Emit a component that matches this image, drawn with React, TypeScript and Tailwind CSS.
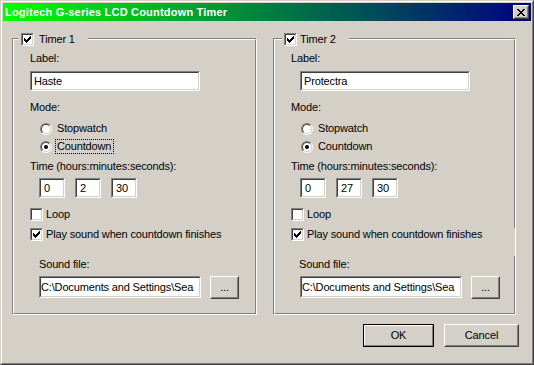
import React from 'react';

function Sunken({ className = '', innerClassName = '', children }: { className?: string; innerClassName?: string; children?: React.ReactNode }) {
  return (
    <div className={`border border-t-[#808080] border-l-[#808080] border-b-white border-r-white ${className}`}>
      <div className={`h-full w-full border border-t-[#404040] border-l-[#404040] border-b-[#d4d0c8] border-r-[#d4d0c8] bg-white overflow-hidden whitespace-nowrap ${innerClassName}`}>
        {children}
      </div>
    </div>
  );
}

function Raised({ className = '', children }: { className?: string; children?: React.ReactNode }) {
  return (
    <div className={`border border-t-white border-l-white border-b-[#404040] border-r-[#404040] bg-[#d4d0c8] ${className}`}>
      <div className="h-full w-full border border-t-[#d4d0c8] border-l-[#d4d0c8] border-b-[#808080] border-r-[#808080] flex items-center justify-center">
        {children}
      </div>
    </div>
  );
}

function Check() {
  return (
    <svg width="7" height="7" viewBox="0 0 7 7" shapeRendering="crispEdges" className="block">
      <rect x="0" y="2" width="1" height="3" fill="#000" />
      <rect x="1" y="3" width="1" height="3" fill="#000" />
      <rect x="2" y="4" width="1" height="3" fill="#000" />
      <rect x="3" y="3" width="1" height="3" fill="#000" />
      <rect x="4" y="2" width="1" height="3" fill="#000" />
      <rect x="5" y="1" width="1" height="3" fill="#000" />
      <rect x="6" y="0" width="1" height="3" fill="#000" />
    </svg>
  );
}

function CheckBox({ checked }: { checked: boolean }) {
  return (
    <div className="w-[13px] h-[13px] shrink-0 border border-t-[#808080] border-l-[#808080] border-b-white border-r-white">
      <div className="h-full w-full border border-t-[#404040] border-l-[#404040] border-b-[#d4d0c8] border-r-[#d4d0c8] bg-white flex items-center justify-center">
        {checked ? <Check /> : null}
      </div>
    </div>
  );
}

function Radio({ checked }: { checked: boolean }) {
  return (
    <div className="w-[12px] h-[12px] shrink-0 rounded-full border border-t-[#808080] border-l-[#808080] border-b-white border-r-white">
      <div className="h-full w-full rounded-full border border-t-[#404040] border-l-[#404040] border-b-[#d4d0c8] border-r-[#d4d0c8] bg-white flex items-center justify-center">
        {checked ? <div className="w-[4px] h-[4px] rounded-full bg-black" /> : null}
      </div>
    </div>
  );
}

function CloseGlyph() {
  const px: [number, number][] = [];
  const rows = ['##....##', '.##..##.', '..####..', '...##...', '..####..', '.##..##.', '##....##'];
  rows.forEach((r, y) => r.split('').forEach((c, x) => { if (c === '#') px.push([x, y]); }));
  return (
    <svg width="8" height="7" viewBox="0 0 8 7" shapeRendering="crispEdges" className="block">
      {px.map(([x, y]) => <rect key={`${x}-${y}`} x={x} y={y} width="1" height="1" fill="#000" />)}
    </svg>
  );
}

type GroupProps = {
  width: string;
  caption: string;
  captionPos: string;
  captionGap: string;
  label: string;
  labelInputMl: string;
  times: string[];
  focus: boolean;
  soundMl: string;
  gapFix?: boolean;
};

function Group(p: GroupProps) {
  return (
    <div className={`relative h-[277px] shrink-0 border border-t-[#808080] border-l-[#808080] border-b-white border-r-white ${p.width}`}>
      <div className="h-full w-full border border-t-white border-l-white border-b-[#808080] border-r-[#808080] flex flex-col items-start pt-[12px]">
        <div className="ml-[16px] leading-[13px]">Label:</div>
        <Sunken className={`mt-[6px] w-[170px] h-[20px] ${p.labelInputMl}`} innerClassName="pl-[2px] leading-[16px]">
          {p.label}
        </Sunken>
        <div className="mt-[10px] ml-[16px] leading-[13px]">Mode:</div>
        <div className="mt-[8px] ml-[26px] flex items-center h-[13px]">
          <Radio checked={false} />
          <span className="ml-[3px] px-[1px] border border-transparent leading-[13px] whitespace-nowrap">Stopwatch</span>
        </div>
        <div className="mt-[5px] ml-[26px] flex items-center h-[13px]">
          <Radio checked={true} />
          <span className={`ml-[3px] pl-[1px] pr-[2px] border leading-[13px] whitespace-nowrap ${p.focus ? 'border-dotted border-black' : 'border-transparent'}`}>Countdown</span>
        </div>
        <div className="mt-[7px] ml-[16px] leading-[13px] whitespace-nowrap">Time (hours:minutes:seconds):</div>
        <div className="mt-[5px] ml-[25px] flex gap-[10px]">
          {p.times.map((t, i) => (
            <Sunken key={i} className="w-[26px] h-[20px]" innerClassName="pl-[3px] leading-[16px]">
              {t}
            </Sunken>
          ))}
        </div>
        <div className="mt-[10px] ml-[16px] flex items-center h-[13px]">
          <CheckBox checked={false} />
          <span className="ml-[3px] leading-[13px]">Loop</span>
        </div>
        <div className="mt-[7px] ml-[16px] flex items-center h-[13px]">
          <CheckBox checked={true} />
          <span className="ml-[3px] leading-[13px] whitespace-nowrap">Play sound when countdown finishes</span>
        </div>
        <div className={`mt-[17px] leading-[13px] ${p.soundMl}`}>Sound file:</div>
        <div className="mt-[5px] ml-[25px] flex items-start">
          <Sunken className="w-[162px] h-[22px]" innerClassName="pl-[0px] leading-[18px]">
            C:\Documents and Settings\Sea
          </Sunken>
          <Raised className="ml-[9px] w-[29px] h-[23px]">
            <span className="leading-[13px]">...</span>
          </Raised>
        </div>
      </div>
      <div className={`absolute top-[-6px] flex items-center h-[13px] bg-[#d4d0c8] pr-[13px] ${p.captionPos}`}>
        <CheckBox checked={true} />
        <span className={`leading-[13px] whitespace-nowrap ${p.captionGap}`}>{p.caption}</span>
      </div>
      {p.gapFix ? <div className="absolute right-0 top-[189px] w-px h-[28px] bg-[#d4d0c8]" /> : null}
    </div>
  );
}

export default function App() {
  return (
    <div className="w-[534px] h-[365px] font-['Liberation_Sans',Arial,sans-serif] text-[11px] leading-[13px] text-black tracking-[-0.15px]">
      <div className="h-full w-full border border-t-[#d4d0c8] border-l-[#d4d0c8] border-b-[#404040] border-r-[#404040]">
        <div className="h-full w-full border border-t-white border-l-white border-b-[#808080] border-r-[#808080] bg-[#d4d0c8] p-px flex flex-col">
          <div className="h-[18px] shrink-0 flex items-center pl-[2px] pr-[2px] bg-[linear-gradient(to_right,#00ff00,#000080)]">
            <span className="text-white font-bold text-[11px] tracking-[0.2px] leading-[13px]">Logitech G-series LCD Countdown Timer</span>
            <Raised className="ml-auto w-[16px] h-[14px]">
              <CloseGlyph />
            </Raised>
          </div>
          <div className="flex flex-col pt-[17px]">
            <div className="flex pl-[9px] gap-[16px]">
              <Group
                width="w-[245px]"
                caption="Timer 1"
                captionPos="left-[5px] pl-[3px]"
                captionGap="ml-[5px]"
                label="Haste"
                labelInputMl="ml-[16px]"
                times={['0', '2', '30']}
                focus={true}
                soundMl="ml-[25px]"
              />
              <Group
                width="w-[243px]"
                caption="Timer 2"
                captionPos="left-[8px] pl-[2px]"
                captionGap="ml-[3px]"
                label="Protectra"
                labelInputMl="ml-[25px]"
                times={['0', '27', '30']}
                focus={false}
                soundMl="ml-[24px]"
                gapFix={true}
              />
            </div>
            <div className="mt-[9px] flex justify-end pr-[12px] gap-[10px]">
              <div className="w-[71px] h-[23px] border border-black">
                <div className="h-full w-full border border-t-white border-l-white border-b-[#808080] border-r-[#808080] flex items-center justify-center">
                  <span>OK</span>
                </div>
              </div>
              <Raised className="w-[75px] h-[23px]">
                <span>Cancel</span>
              </Raised>
            </div>
          </div>
        </div>
      </div>
    </div>
  );
}
